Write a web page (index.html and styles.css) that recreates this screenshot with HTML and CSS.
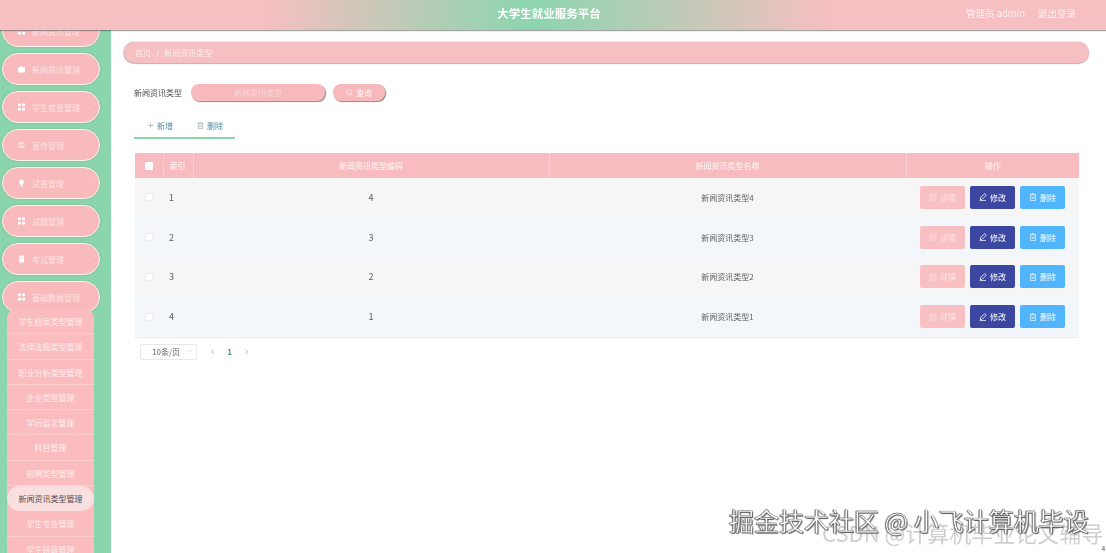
FILE: index.html
```html
<!DOCTYPE html>
<html lang="zh">
<head>
<meta charset="utf-8">
<title>大学生就业服务平台</title>
<link rel="stylesheet" href="styles.css">
</head>
<body>
<svg class="defs" width="0" height="0" aria-hidden="true">
  <symbol id="i-grid" viewBox="0 0 10 10"><path d="M0 0h4v4H0zM6 0h4v4H6zM0 6h4v4H0zM6 6h4v4H6z" fill="currentColor"/></symbol>
  <symbol id="i-trash" viewBox="0 0 10 10"><path d="M1 2h8M3.500 2V.8h3V2M2 2v7.400h6V2M4 4v3.500M6 4v3.500" fill="none" stroke="currentColor" stroke-width=".8"/></symbol>
  <symbol id="i-doc" viewBox="0 0 10 10"><path d="M1.500 1h7v8h-7zM3 3.500h4M3 5.500h4M3 7.500h2.500" fill="none" stroke="currentColor" stroke-width=".8"/></symbol>
  <symbol id="i-edit" viewBox="0 0 10 10"><path d="M7 .8 9 2.800 4 7.800 1.600 8.300 2 5.800zM.8 9.500h8" fill="none" stroke="currentColor" stroke-width="1"/></symbol>
  <symbol id="i-chev" viewBox="0 0 10 10"><path d="M2 3.500 5 6.500 8 3.500" fill="none" stroke="currentColor" stroke-width=".9"/></symbol>
</svg>
<div class="app">
  <header class="topbar">
    <div class="topbar-spacer"></div>
    <h1 class="brand">大学生就业服务平台</h1>
    <div class="user"><span>管理员 admin</span><span>退出登录</span></div>
  </header>
  <div class="body">
    <aside class="sidebar">
      <nav class="menu">
        <div class="menu-item"><svg class="mi"><use href="#i-grid"/></svg><span class="ml">新闻资讯管理</span><svg class="chev"><use href="#i-chev"/></svg></div>
        <div class="menu-item"><svg class="mi" viewBox="0 0 10 10"><path d="M5 0 7 2.500H10V10H0V2.500H3z" fill="currentColor"/></svg><span class="ml">新闻资讯管理</span><svg class="chev"><use href="#i-chev"/></svg></div>
        <div class="menu-item"><svg class="mi"><use href="#i-grid"/></svg><span class="ml">学生信息管理</span><svg class="chev"><use href="#i-chev"/></svg></div>
        <div class="menu-item"><svg class="mi" viewBox="0 0 10 10"><path d="M1 1.500h8v1.500H1zM0 4.500h10v1H0zM1 7h8v1.500H1z" fill="currentColor"/></svg><span class="ml">宣传管理</span><svg class="chev"><use href="#i-chev"/></svg></div>
        <div class="menu-item"><svg class="mi" viewBox="0 0 10 10"><path d="M5 0a3.500 3.500 0 0 1 2 6.400V7.500H3V6.400A3.500 3.500 0 0 1 5 0zM3.500 8.300h3V10h-3z" fill="currentColor"/></svg><span class="ml">试卷管理</span><svg class="chev"><use href="#i-chev"/></svg></div>
        <div class="menu-item"><svg class="mi"><use href="#i-grid"/></svg><span class="ml">试题管理</span><svg class="chev"><use href="#i-chev"/></svg></div>
        <div class="menu-item"><svg class="mi" viewBox="0 0 10 10"><path d="M1.500 0h7v10h-7z" fill="currentColor"/><path d="M3 3h4M3 5h4" stroke="#f8b9bc" stroke-width=".7"/></svg><span class="ml">考试管理</span><svg class="chev"><use href="#i-chev"/></svg></div>
        <div class="menu-item"><svg class="mi"><use href="#i-grid"/></svg><span class="ml">基础数据管理</span><svg class="chev"><use href="#i-chev"/></svg></div>
        <ul class="submenu">
          <li>学生档案类型管理</li>
          <li>法律法规类型管理</li>
          <li>职业分析类型管理</li>
          <li>企业类型管理</li>
          <li>学历层次管理</li>
          <li>科目管理</li>
          <li>招聘类型管理</li>
          <li class="active">新闻资讯类型管理</li>
          <li>学生专业管理</li>
          <li>学生班级管理</li>
        </ul>
      </nav>
    </aside>
    <main class="main">
      <div class="crumb"><span>首页</span><span class="sep">/</span><span>新闻资讯类型</span></div>
      <form class="search">
        <label class="search-label">新闻资讯类型</label>
        <div class="search-input">新闻资讯类型</div>
        <button type="button" class="search-btn"><svg class="si" viewBox="0 0 10 10"><circle cx="4.500" cy="4.500" r="3.500" fill="none" stroke="currentColor" stroke-width=".8"/><path d="M7 7l2.500 2.500" stroke="currentColor" stroke-width=".8"/></svg>查询</button>
      </form>
      <div class="tabs">
        <span class="tab"><svg class="si" viewBox="0 0 10 10"><path d="M5 1v8M1 5h8" stroke="#8a9a9a" stroke-width=".8"/></svg>新增</span>
        <span class="tab"><svg class="si gray"><use href="#i-trash"/></svg>删除</span>
      </div>
      <table class="grid">
        <colgroup><col class="c1"><col class="c2"><col class="c3"><col class="c4"><col class="c5"></colgroup>
        <thead>
          <tr><th><i class="cb solid"></i></th><th class="left">索引</th><th>新闻资讯类型编码</th><th>新闻资讯类型名称</th><th>操作</th></tr>
        </thead>
        <tbody>
          <tr><td><i class="cb"></i></td><td class="left num">1</td><td class="num">4</td><td>新闻资讯类型4</td><td><div class="ops"><a class="op pink"><svg class="si"><use href="#i-doc"/></svg>详情</a><a class="op navy"><svg class="si"><use href="#i-edit"/></svg>修改</a><a class="op sky"><svg class="si"><use href="#i-trash"/></svg>删除</a></div></td></tr>
          <tr><td><i class="cb"></i></td><td class="left num">2</td><td class="num">3</td><td>新闻资讯类型3</td><td><div class="ops"><a class="op pink"><svg class="si"><use href="#i-doc"/></svg>详情</a><a class="op navy"><svg class="si"><use href="#i-edit"/></svg>修改</a><a class="op sky"><svg class="si"><use href="#i-trash"/></svg>删除</a></div></td></tr>
          <tr><td><i class="cb"></i></td><td class="left num">3</td><td class="num">2</td><td>新闻资讯类型2</td><td><div class="ops"><a class="op pink"><svg class="si"><use href="#i-doc"/></svg>详情</a><a class="op navy"><svg class="si"><use href="#i-edit"/></svg>修改</a><a class="op sky"><svg class="si"><use href="#i-trash"/></svg>删除</a></div></td></tr>
          <tr><td><i class="cb"></i></td><td class="left num">4</td><td class="num">1</td><td>新闻资讯类型1</td><td><div class="ops"><a class="op pink"><svg class="si"><use href="#i-doc"/></svg>详情</a><a class="op navy"><svg class="si"><use href="#i-edit"/></svg>修改</a><a class="op sky"><svg class="si"><use href="#i-trash"/></svg>删除</a></div></td></tr>
        </tbody>
      </table>
      <div class="pager">
        <div class="page-size"><span>10条/页</span><svg class="pchev"><use href="#i-chev"/></svg></div>
        <span class="arrow">‹</span><span class="page-num">1</span><span class="arrow">›</span>
      </div>
    </main>
  </div>
</div>
<div class="wm-back">CSDN @计算机毕业论文辅导</div>
<div class="wm-front">掘金技术社区 @ 小飞计算机毕设</div>
<div class="wm-num">4</div>
</body>
</html>
```
FILE: styles.css
```css
* { box-sizing: border-box; }
html, body { margin: 0; height: 100%; overflow: hidden; background: #fff; }
body { font-family: "Noto Sans CJK SC", "Noto Sans", sans-serif; font-size: 8px; color: #606266; position: relative; }
.defs { position: absolute; }
.app { height: 553px; display: flex; flex-direction: column; filter: blur(.55px); }

.topbar { height: 30px; flex: none; display: flex; align-items: center; position: relative; z-index: 2; background: linear-gradient(90deg, #f6bfc1 0%, #f6bfc1 24%, #8bd5ae 48%, #f6bfc1 75%, #f6bfc1 100%); box-shadow: 0 1px 1px rgba(70,70,70,.5); color: #fff; }
.topbar-spacer { flex: 1 1 0; }
.brand { margin: 0; font-size: 11.500px; font-weight: 700; line-height: 26px; padding: 0 0 4px 22px; color: #fff; }
.user { flex: 1 1 0; display: flex; justify-content: flex-end; gap: 13px; padding-right: 30px; font-size: 9.500px; padding-bottom: 5px; color: #fdf2f2; }

.body { flex: 1; display: flex; min-height: 0; }
.sidebar { width: 111px; flex: none; background: #8bd5ae; overflow: hidden; }
.menu { display: flex; flex-direction: column; gap: 6px; margin-top: -15px; padding-left: 2px; }
.menu-item { width: 98px; height: 32px; flex: none; display: flex; align-items: center; padding: 0 6px 0 15px; border: 1.500px solid #fdf6ee; border-radius: 16px; background: #f8babd; color: #fff; box-shadow: 0 0 2px rgba(120,120,90,.4); }
.mi { width: 7px; height: 8px; flex: none; margin-right: 7px; color: #fff; }
.ml { flex: 1; white-space: nowrap; color: #fbe3e3; }
.chev { width: 7px; height: 7px; color: #f9d5d5; flex: none; }
.submenu { list-style: none; margin: -10px 0 0 5px; padding: 0; width: 87px; background: #fbbcbf; border-radius: 9px 9px 0 0; position: relative; }
.submenu li { height: 25.300px; line-height: 25px; text-align: center; color: #fdeeee; white-space: nowrap; border-bottom: 1px solid #fbcfcf; }
.submenu li.active { background: #f9dfe0; color: #5a4a4c; border-radius: 13px; border-bottom: 0; }

.main { flex: 1; min-width: 0; padding: 12px 17px 0 13px; }
.crumb { height: 21px; width: 965px; border-radius: 11px; background: #f6bfc1; box-shadow: 0 1px 1px rgba(110,110,110,.5), -1px 0 1px rgba(110,110,110,.3), 0 -1px 1px rgba(150,150,150,.2); display: flex; align-items: center; gap: 5px; padding-left: 11px; color: #fdeeee; font-size: 8px; }
.search { display: flex; align-items: center; margin: 21px 0 0 10px; height: 17px; }
.search-label { width: 57px; flex: none; color: #4d4f52; }
.search-input { width: 134px; height: 17px; border-radius: 8px; background: #f8b9bc; box-shadow: 1px 1px 1px rgba(90,90,90,.7); text-align: center; line-height: 17px; color: #f5d7d8; margin-right: 8px; }
.search-btn { width: 52px; height: 17px; border: 0; padding: 0; border-radius: 8px; background: #f8b9bc; box-shadow: 1px 1px 1px rgba(90,90,90,.7); color: #fff; font: inherit; display: flex; align-items: center; justify-content: center; }
.si { width: 7px; height: 7px; margin-right: 3px; flex: none; }
.tabs { width: 101px; height: 23px; margin: 15px 0 0 10px; border-bottom: 2px solid #8bd5ae; display: flex; align-items: center; gap: 24px; padding: 0 0 2px 13px; color: #4f8fa8; }
.tab { display: flex; align-items: center; white-space: nowrap; }
.gray { color: #8a9a9a; }

.grid { width: 944px; margin: 14px 0 0 11px; border-collapse: collapse; table-layout: fixed; font-size: 8px; }
.c1 { width: 28px; } .c2 { width: 30px; } .c3 { width: 356px; } .c4 { width: 357px; } .c5 { width: 173px; }
.grid th { height: 25px; padding: 0; background: #f8bcc0; color: #fdeeee; font-weight: 500; text-align: center; border-left: 1px solid #fbd2d3; }
.grid th:first-child { border-left: 0; }
.grid td { height: 39.800px; padding: 0 0 1px; text-align: center; color: #5d6064; }
.grid tbody tr:nth-child(odd) td { background: #f5f6f5; }
.grid tbody tr:nth-child(even) td { background: #f3f6fa; }
.grid tbody tr:last-child td { border-bottom: 1px solid #e9edf2; }
.grid .left { text-align: left; padding-left: 6px; }
.grid .num { font-size: 9px; }
.cb { display: block; width: 8px; height: 8px; margin: 0 auto; background: #fff; border: 1px solid #eceef2; }
.cb.solid { border-color: #fff; }
.ops { display: flex; justify-content: center; gap: 5px; }
.op { width: 45px; height: 23px; border-radius: 2px; color: #fff; display: flex; align-items: center; justify-content: center; }
.op .si { width: 8px; height: 8px; }
.pink { background: #f8c0c3; color: #fde5e5; }
.navy { background: #3b47a0; }
.sky { background: #50b5fb; }

.pager { display: flex; align-items: center; margin: 6px 0 0 16px; height: 16px; color: #606266; }
.page-size { width: 57px; height: 16px; border: 1px solid #e8e8e8; border-radius: 2px; display: flex; align-items: center; justify-content: space-between; padding: 0 3px 0 11px; margin-right: 14px; }
.pchev { width: 7px; height: 7px; color: #ccc; }
.arrow { font-size: 11px; color: #a8adb3; line-height: 12px; padding-bottom: 3px; }
.page-num { margin: 0 13px; color: #3d9d78; font-weight: 700; padding-bottom: 1px; }

.wm-front, .wm-back, .wm-num { position: absolute; white-space: nowrap; pointer-events: none; }
.wm-front { left: 729px; top: 503px; font-size: 25px; line-height: 34px; color: #fff; -webkit-text-stroke: .3px #444; text-shadow: 1px 1px 1px #666, -1px 0 1px #777; z-index: 5; }
.wm-back { left: 822px; top: 519px; font-size: 22px; line-height: 26px; color: #cfcfcf; z-index: 4; }
.wm-num { right: 1px; top: 545px; font-size: 6px; line-height: 8px; color: #444; z-index: 5; }
```
